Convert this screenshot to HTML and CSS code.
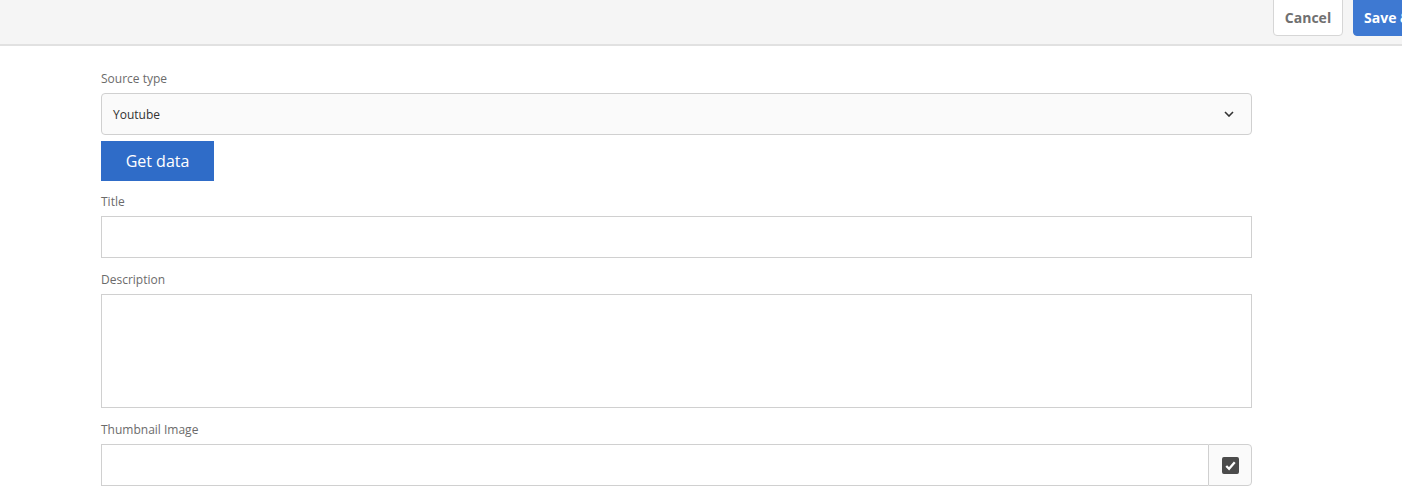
FILE: index.html
```html
<!DOCTYPE html>
<html>
<head>
<meta charset="utf-8">
<link rel="stylesheet" href="styles.css">
</head>
<body>
<header class="topbar">
  <div class="actions">
    <button class="btn-cancel">Cancel</button>
    <button class="btn-save">Save &amp; Close</button>
  </div>
</header>
<main class="form">
  <div class="field">
    <label class="label">Source type</label>
    <div class="select">
      <span>Youtube</span>
      <svg class="chev" width="10" height="6" viewBox="0 0 10 6"><path d="M1 1 L5 5 L9 1" fill="none" stroke="#333" stroke-width="1.6"/></svg>
    </div>
    <button class="btn-get">Get data</button>
  </div>
  <div class="field">
    <label class="label">Title</label>
    <div class="input"></div>
  </div>
  <div class="field">
    <label class="label">Description</label>
    <div class="textarea"></div>
  </div>
  <div class="field">
    <label class="label">Thumbnail Image</label>
    <div class="input-group">
      <div class="input grow"></div>
      <div class="addon">
        <svg width="17" height="17" viewBox="0 0 18 18"><rect x="0" y="0" width="18" height="18" rx="2" fill="#4b4b4b"/><path d="M4.5 9.5 L7.5 12.5 L13.5 5.5" fill="none" stroke="#fff" stroke-width="2.4"/></svg>
      </div>
    </div>
  </div>
</main>
</body>
</html>
```
FILE: styles.css
```css
html, body {
  margin: 0;
  padding: 0;
  overflow: hidden;
  background: #fff;
  font-family: "Open Sans", "Liberation Sans", sans-serif;
  color: #4b4b4b;
}
.topbar {
  height: 44px;
  background: #f5f5f5;
  border-bottom: 2px solid #e1e1e1;
  display: flex;
  justify-content: flex-end;
}
.actions {
  display: flex;
  gap: 10px;
  align-items: flex-start;
  margin-right: -91px;
}
.actions button {
  font-family: "Open Sans", "Liberation Sans", sans-serif;
  font-size: 14px;
  font-weight: 700;
  height: 40px;
  margin-top: -4px;
  padding: 2px 10px 0;
  border-radius: 4px;
  cursor: pointer;
}
.btn-cancel {
  background: #fff;
  border: 1px solid #d6d6d6;
  color: #707070;
  width: 70px;
}
.btn-save {
  background: #3e79d2;
  border: 1px solid #3e79d2;
  color: #fff;
  white-space: nowrap;
  text-align: left;
  width: 140px;
}
.form {
  padding: 25px 0 0 101px;
  width: 1151px;
}
.field {
  display: flex;
  flex-direction: column;
}
.label {
  font-size: 12px;
  color: #6b6b6b;
  line-height: 16px;
  margin-bottom: 6px;
}
.select {
  height: 40px;
  border: 1px solid #d0d0d0;
  border-radius: 4px;
  background: #fafafa;
  display: flex;
  align-items: center;
  justify-content: space-between;
  padding: 0 17px 0 11px;
  font-size: 12px;
  color: #333;
}
.btn-get {
  margin-top: 6px;
  width: 113px;
  height: 40px;
  background: #2f6cc8;
  border: none;
  color: #fff;
  font-family: "Open Sans", "Liberation Sans", sans-serif;
  font-size: 16px;
  padding: 0;
  margin-bottom: 13px;
}
.input {
  height: 40px;
  border: 1px solid #d0d0d0;
  background: #fff;
  margin-bottom: 14px;
}
.textarea {
  height: 112px;
  border: 1px solid #d0d0d0;
  background: #fff;
  margin-bottom: 14px;
}
.input-group {
  display: flex;
}
.input.grow {
  flex: 1;
  margin-bottom: 0;
  border-right: none;
}
.addon {
  width: 42px;
  height: 40px;
  border: 1px solid #d0d0d0;
  border-radius: 0 4px 4px 0;
  background: #fafafa;
  display: flex;
  align-items: center;
  justify-content: center;
}
```
